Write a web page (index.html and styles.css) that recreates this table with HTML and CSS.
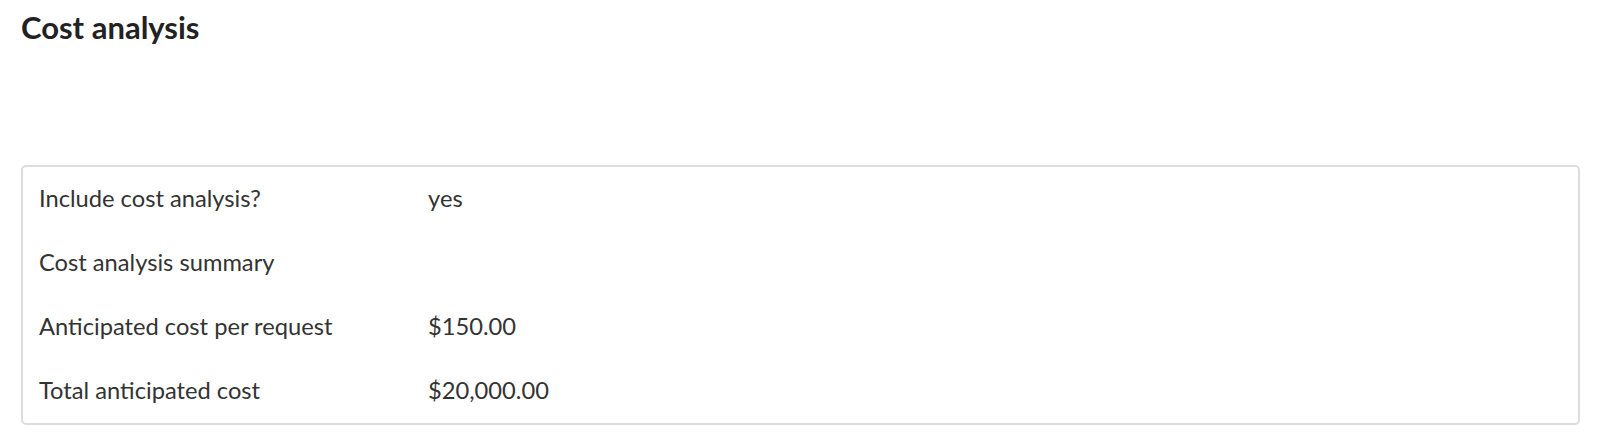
FILE: index.html
```html
<!DOCTYPE html>
<html lang="en">
<head>
    <meta charset="UTF-8">
    <meta name="viewport" content="width=device-width, initial-scale=1.0">
    <title>Cost analysis</title>
    <link rel="stylesheet" href="styles.css">
</head>
<body>
    <h1 class="section-title">Cost analysis</h1>
    <div class="summary-box">
        <div class="summary-row">
            <span class="summary-label">Include cost analysis?</span>
            <span class="summary-value">yes</span>
        </div>
        <div class="summary-row">
            <span class="summary-label">Cost analysis summary</span>
            <span class="summary-value"></span>
        </div>
        <div class="summary-row">
            <span class="summary-label">Anticipated cost per request</span>
            <span class="summary-value">$150.00</span>
        </div>
        <div class="summary-row">
            <span class="summary-label">Total anticipated cost</span>
            <span class="summary-value">$20,000.00</span>
        </div>
    </div>
</body>
</html>
```

FILE: styles.css
```css
body {
    margin: 0;
    padding: 0 22px 0 21px;
    font-family: Lato, "Open Sans", sans-serif;
    background-color: #ffffff;
    color: #333333;
}
.section-title {
    font-size: 31px;
    font-weight: 700;
    color: #222222;
    line-height: 36px;
    margin: 9px 0 0 0;
}
.summary-box {
    margin-top: 120px;
    border: 2px solid #dddddd;
    border-radius: 5px;
    padding: 0 16px;
}
.summary-row {
    box-sizing: border-box;
    display: flex;
    align-items: center;
    height: 64px;
    padding-bottom: 3px;
    font-size: 23.7px;
}
.summary-label {
    width: 389px;
    flex-shrink: 0;
}
```
